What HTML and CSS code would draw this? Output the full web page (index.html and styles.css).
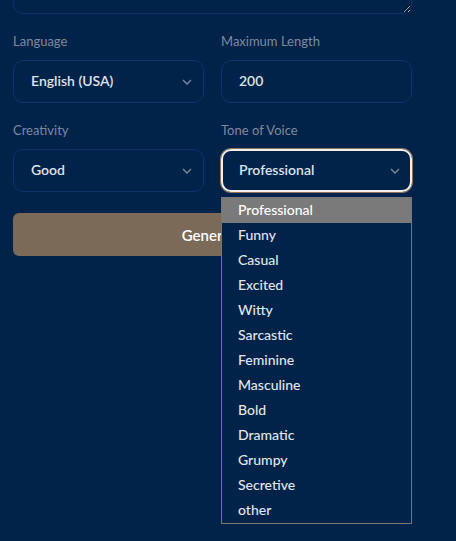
FILE: index.html
```html
<!DOCTYPE html>
<html lang="en">
<head>
  <meta charset="UTF-8" />
  <meta name="viewport" content="width=device-width, initial-scale=1.0"/>
  <title>Generator</title>
  <link rel="stylesheet" href="styles.css">
</head>
<body>

  <div class="form">
    <textarea class="prompt"></textarea>

    <div class="row">
      <div class="field">
        <label>Language</label>
        <div class="select">
          <span>English (USA)</span>
          <svg class="chevron" viewBox="0 0 10 6"><path d="M1 1l4 4 4-4" /></svg>
        </div>
      </div>
      <div class="field">
        <label>Maximum Length</label>
        <div class="select">
          <span>200</span>
        </div>
      </div>
    </div>

    <div class="row">
      <div class="field">
        <label>Creativity</label>
        <div class="select">
          <span>Good</span>
          <svg class="chevron" viewBox="0 0 10 6"><path d="M1 1l4 4 4-4" /></svg>
        </div>
      </div>
      <div class="field tone">
        <label>Tone of Voice</label>
        <div class="select focused">
          <span>Professional</span>
          <svg class="chevron" viewBox="0 0 10 6"><path d="M1 1l4 4 4-4" /></svg>
        </div>

        <!-- open dropdown list -->
        <ul class="options">
          <li class="active">Professional</li>
          <li>Funny</li>
          <li>Casual</li>
          <li>Excited</li>
          <li>Witty</li>
          <li>Sarcastic</li>
          <li>Feminine</li>
          <li>Masculine</li>
          <li>Bold</li>
          <li>Dramatic</li>
          <li>Grumpy</li>
          <li>Secretive</li>
          <li>other</li>
        </ul>
      </div>
    </div>

    <button class="generate">Generate</button>
  </div>

</body>
</html>
```

FILE: styles.css
```css
html, body {
  height: 100%;
}

body {
  margin: 0;
  font-family: 'Lato', 'Liberation Sans', sans-serif;
  background: #012249;
}

.form {
  width: 399px;
  padding-left: 13px;
}

.prompt {
  display: block;
  box-sizing: border-box;
  width: 100%;
  height: 60px;
  margin: -46px 0 0;
  background: #012249;
  border: 1px solid #0d3466;
  border-radius: 10px;
  resize: vertical;
}

.row {
  display: grid;
  grid-template-columns: 1fr 1fr;
  column-gap: 17px;
  margin-top: 19px;
}

.field {
  display: flex;
  flex-direction: column;
}

.field label {
  font-size: 13px;
  line-height: 16px;
  color: #7e8aa0;
  margin-bottom: 11px;
}

.select {
  box-sizing: border-box;
  height: 43px;
  display: flex;
  align-items: center;
  justify-content: space-between;
  padding: 0 11px 2px 17px;
  border: 1px solid #0d3466;
  border-radius: 10px;
  font-size: 14px;
  font-weight: 600;
  color: #dfe3ea;
}

.select.focused {
  border: 2px solid #f2efe9;
  box-shadow: 0 0 0 1px #8a745e;
  padding-left: 16px;
  padding-right: 10px;
}

.chevron {
  width: 10px;
  height: 6px;
  margin-top: 2px;
  fill: none;
  stroke: #7f8aa0;
  stroke-width: 1.3;
}

.tone {
  position: relative;
}

.options {
  position: absolute;
  top: 75px;
  left: 0;
  width: 191px;
  box-sizing: border-box;
  margin: 0;
  padding: 0;
  list-style: none;
  background: #012249;
  border: 1px solid #767676;
  z-index: 10;
}

.options li {
  height: 25px;
  line-height: 24px;
  padding-left: 16px;
  font-size: 14px;
  font-weight: 500;
  color: #e2e6ec;
}

.options li.active {
  background: #7a7a7a;
  color: #fff;
}

.generate {
  display: block;
  width: 100%;
  height: 43px;
  margin-top: 21px;
  border: none;
  border-radius: 6px;
  background: #7b6a58;
  color: #fff;
  font-family: inherit;
  font-size: 15px;
  font-weight: 600;
}
```
